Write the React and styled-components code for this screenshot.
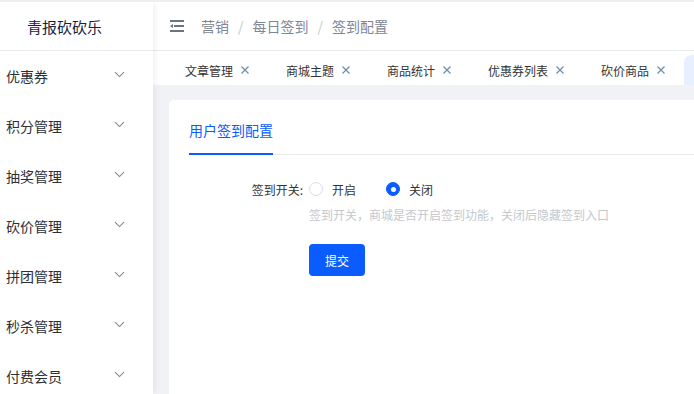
import React from "react";
import styled, { createGlobalStyle } from "styled-components";

const Global = createGlobalStyle`
  html, body { margin: 0; padding: 0; }
  body {
    font-family: "Noto Sans CJK SC", "Noto Sans", sans-serif;
    background: #fff;
    overflow: hidden;
  }
  * { box-sizing: border-box; }
`;

const Shell = styled.div`
  display: flex;
  height: 100vh;
  border-top: 2px solid #eceef1;
  overflow: hidden;
`;

const Sidebar = styled.aside`
  width: 153px;
  flex: none;
  background: #fff;
  display: flex;
  flex-direction: column;
  position: relative;
  z-index: 2;
  box-shadow: 2px 0 6px rgba(0, 21, 41, 0.06);
`;

const Logo = styled.div`
  height: 49px;
  border-bottom: 1px solid #e8eaec;
  display: flex;
  align-items: center;
  padding-left: 27px;
  font-size: 15px;
  color: #17233d;
  flex: none;
`;

const MenuItem = styled.div`
  height: 50px;
  flex: none;
  display: flex;
  align-items: center;
  justify-content: space-between;
  padding: 0 28px 0 6px;
  font-size: 14px;
  color: #2b2f36;
`;

const Chevron = styled.svg`
  width: 11px;
  height: 7px;
  margin-top: -4px;
`;

const Main = styled.div`
  flex: 1;
  min-width: 0;
  display: flex;
  flex-direction: column;
`;

const Header = styled.header`
  height: 49px;
  flex: none;
  border-bottom: 1px solid #e8eaec;
  display: flex;
  align-items: center;
  padding-left: 17px;
  background: #fff;
`;

const Hamburger = styled.svg`
  width: 14px;
  height: 12px;
  margin-right: 17px;
`;

const Crumb = styled.span`
  font-size: 14px;
  color: #808695;
`;

const Sep = styled.span`
  font-size: 14px;
  color: #c5c8ce;
  padding: 0 9px;
`;

const TabBar = styled.div`
  height: 34px;
  flex: none;
  background: #fff;
  display: flex;
  align-items: flex-end;
  padding-left: 14px;
  white-space: nowrap;
  overflow: hidden;
`;

const Tab = styled.div`
  height: 30px;
  flex: none;
  display: flex;
  align-items: center;
  gap: 7px;
  padding: 0 18px;
  font-size: 12px;
  color: #333;
`;

const ActiveTab = styled.div`
  height: 30px;
  width: 90px;
  flex: none;
  background: #e8f0ff;
  border-radius: 8px 8px 0 0;
`;

const Close = styled.svg`
  width: 10px;
  height: 10px;
`;

const Content = styled.main`
  flex: 1;
  background: #f0f2f5;
  padding: 15px 0 0 16px;
  display: flex;
  min-height: 0;
`;

const Card = styled.section`
  flex: 1;
  background: #fff;
  border-radius: 5px 0 0 0;
  padding: 0 0 0 20px;
`;

const CardTabs = styled.div`
  height: 55px;
  border-bottom: 1px solid #e8eaec;
  display: flex;
  align-items: flex-end;
`;

const CardTab = styled.div`
  font-size: 14px;
  line-height: 20px;
  color: #0b5cff;
  padding-bottom: 13px;
  border-bottom: 2px solid #0b5cff;
  margin-bottom: -1px;
`;

const Form = styled.div`
  padding-top: 24px;
`;

const Row = styled.div`
  display: flex;
  align-items: center;
  height: 20px;
`;

const Label = styled.label`
  width: 120px;
  padding-right: 6px;
  text-align: right;
  font-size: 12px;
  color: #333;
`;

const RadioOption = styled.label`
  display: flex;
  align-items: center;
  gap: 9px;
  font-size: 12px;
  color: #333;
  margin-right: 30px;
`;

const RadioDot = styled.span`
  width: 14px;
  height: 14px;
  border-radius: 50%;
  border: 1px solid ${(p) => (p.$checked ? "#0b5cff" : "#dcdee2")};
  background: ${(p) => (p.$checked ? "#0b5cff" : "#fff")};
  display: flex;
  align-items: center;
  justify-content: center;
  &::after {
    content: "";
    width: 5px;
    height: 5px;
    border-radius: 50%;
    background: ${(p) => (p.$checked ? "#fff" : "transparent")};
  }
`;

const Help = styled.div`
  margin: 6px 0 0 120px;
  font-size: 12px;
  line-height: 20px;
  color: #c5c8ce;
`;

const Submit = styled.button`
  margin: 19px 0 0 120px;
  width: 56px;
  height: 32px;
  border: none;
  border-radius: 4px;
  background: #0b5cff;
  color: #fff;
  font-family: inherit;
  font-size: 12px;
  cursor: pointer;
`;

const menus = ["优惠券", "积分管理", "抽奖管理", "砍价管理", "拼团管理", "秒杀管理", "付费会员"];
const tabs = ["文章管理", "商城主题", "商品统计", "优惠券列表", "砍价商品"];

const ChevronIcon = () => (
  <Chevron viewBox="0 0 11 7">
    <path d="M1 1.2 L5.5 5.6 L10 1.2" fill="none" stroke="#808695" strokeWidth="1.1" />
  </Chevron>
);

const CloseIcon = () => (
  <Close viewBox="0 0 10 10">
    <path d="M1.5 1.5 L8.5 8.5 M8.5 1.5 L1.5 8.5" stroke="#6b8cb0" strokeWidth="1.2" fill="none" />
  </Close>
);

export default function App() {
  return (
    <>
      <Global />
      <Shell>
        <Sidebar>
          <Logo>青报砍砍乐</Logo>
          {menus.map((m) => (
            <MenuItem key={m}>
              <span>{m}</span>
              <ChevronIcon />
            </MenuItem>
          ))}
        </Sidebar>
        <Main>
          <Header>
            <Hamburger viewBox="0 0 14 12">
              <rect x="0" y="0" width="14" height="2" fill="#6d7380" />
              <rect x="4" y="5" width="10" height="2" fill="#6d7380" />
              <path d="M0 6 L3 4 L3 8 Z" fill="#6d7380" />
              <rect x="0" y="10" width="14" height="2" fill="#6d7380" />
            </Hamburger>
            <Crumb>营销</Crumb>
            <Sep>/</Sep>
            <Crumb>每日签到</Crumb>
            <Sep>/</Sep>
            <Crumb>签到配置</Crumb>
          </Header>
          <TabBar>
            {tabs.map((t) => (
              <Tab key={t}>
                <span>{t}</span>
                <CloseIcon />
              </Tab>
            ))}
            <ActiveTab />
          </TabBar>
          <Content>
            <Card>
              <CardTabs>
                <CardTab>用户签到配置</CardTab>
              </CardTabs>
              <Form>
                <Row>
                  <Label>签到开关:</Label>
                  <RadioOption>
                    <RadioDot />
                    开启
                  </RadioOption>
                  <RadioOption>
                    <RadioDot $checked />
                    关闭
                  </RadioOption>
                </Row>
                <Help>签到开关，商城是否开启签到功能，关闭后隐藏签到入口</Help>
                <Submit>提交</Submit>
              </Form>
            </Card>
          </Content>
        </Main>
      </Shell>
    </>
  );
}
